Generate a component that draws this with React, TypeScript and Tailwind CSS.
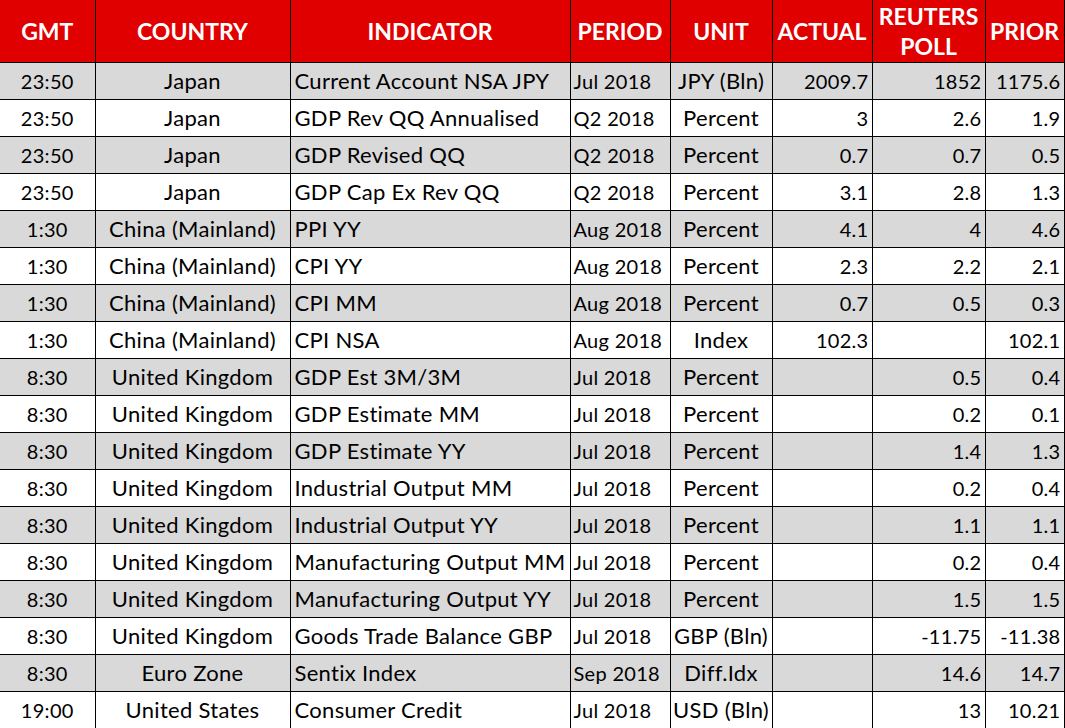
type Row = {
  gmt: string;
  country: string;
  indicator: string;
  period: string;
  unit: string;
  actual: string;
  poll: string;
  prior: string;
};

const rows: Row[] = [
  { gmt: "23:50", country: "Japan", indicator: "Current Account NSA JPY", period: "Jul 2018", unit: "JPY (Bln)", actual: "2009.7", poll: "1852", prior: "1175.6" },
  { gmt: "23:50", country: "Japan", indicator: "GDP Rev QQ Annualised", period: "Q2 2018", unit: "Percent", actual: "3", poll: "2.6", prior: "1.9" },
  { gmt: "23:50", country: "Japan", indicator: "GDP Revised QQ", period: "Q2 2018", unit: "Percent", actual: "0.7", poll: "0.7", prior: "0.5" },
  { gmt: "23:50", country: "Japan", indicator: "GDP Cap Ex Rev QQ", period: "Q2 2018", unit: "Percent", actual: "3.1", poll: "2.8", prior: "1.3" },
  { gmt: "1:30", country: "China (Mainland)", indicator: "PPI YY", period: "Aug 2018", unit: "Percent", actual: "4.1", poll: "4", prior: "4.6" },
  { gmt: "1:30", country: "China (Mainland)", indicator: "CPI YY", period: "Aug 2018", unit: "Percent", actual: "2.3", poll: "2.2", prior: "2.1" },
  { gmt: "1:30", country: "China (Mainland)", indicator: "CPI MM", period: "Aug 2018", unit: "Percent", actual: "0.7", poll: "0.5", prior: "0.3" },
  { gmt: "1:30", country: "China (Mainland)", indicator: "CPI NSA", period: "Aug 2018", unit: "Index", actual: "102.3", poll: "", prior: "102.1" },
  { gmt: "8:30", country: "United Kingdom", indicator: "GDP Est 3M/3M", period: "Jul 2018", unit: "Percent", actual: "", poll: "0.5", prior: "0.4" },
  { gmt: "8:30", country: "United Kingdom", indicator: "GDP Estimate MM", period: "Jul 2018", unit: "Percent", actual: "", poll: "0.2", prior: "0.1" },
  { gmt: "8:30", country: "United Kingdom", indicator: "GDP Estimate YY", period: "Jul 2018", unit: "Percent", actual: "", poll: "1.4", prior: "1.3" },
  { gmt: "8:30", country: "United Kingdom", indicator: "Industrial Output MM", period: "Jul 2018", unit: "Percent", actual: "", poll: "0.2", prior: "0.4" },
  { gmt: "8:30", country: "United Kingdom", indicator: "Industrial Output YY", period: "Jul 2018", unit: "Percent", actual: "", poll: "1.1", prior: "1.1" },
  { gmt: "8:30", country: "United Kingdom", indicator: "Manufacturing Output MM", period: "Jul 2018", unit: "Percent", actual: "", poll: "0.2", prior: "0.4" },
  { gmt: "8:30", country: "United Kingdom", indicator: "Manufacturing Output YY", period: "Jul 2018", unit: "Percent", actual: "", poll: "1.5", prior: "1.5" },
  { gmt: "8:30", country: "United Kingdom", indicator: "Goods Trade Balance GBP", period: "Jul 2018", unit: "GBP (Bln)", actual: "", poll: "-11.75", prior: "-11.38" },
  { gmt: "8:30", country: "Euro Zone", indicator: "Sentix Index", period: "Sep 2018", unit: "Diff.Idx", actual: "", poll: "14.6", prior: "14.7" },
  { gmt: "19:00", country: "United States", indicator: "Consumer Credit", period: "Jul 2018", unit: "USD (Bln)", actual: "", poll: "13", prior: "10.21" },
];

const th = "border border-black bg-[#e00000] text-white font-bold text-[23px] leading-[26px] text-center align-middle p-0 whitespace-nowrap";
const td = "border border-black text-black leading-[24px] tracking-[0.3px] align-middle p-0 whitespace-nowrap overflow-hidden";
// Lato digits run wider than the original's, so numeric cells get a smaller size
const txt = td + " text-[22px]";
const num = td + " text-[20px]";

export default function App() {
  return (
    <div className="w-[1065px] h-[728px] bg-white overflow-hidden" style={{ fontFamily: "Lato, 'Open Sans', sans-serif" }}>
      <table className="border-collapse table-fixed w-[1064px]">
        <colgroup>
          <col className="w-[95px]" />
          <col className="w-[195px]" />
          <col className="w-[280px]" />
          <col className="w-[100px]" />
          <col className="w-[102px]" />
          <col className="w-[100px]" />
          <col className="w-[113px]" />
          <col className="w-[79px]" />
        </colgroup>
        <thead>
          <tr className="h-[62px]">
            <th className={th + " border-l-0 border-t-0"}>GMT</th>
            <th className={th + " border-t-0"}>COUNTRY</th>
            <th className={th + " border-t-0"}>INDICATOR</th>
            <th className={th + " border-t-0"}>PERIOD</th>
            <th className={th + " border-t-0"}>UNIT</th>
            <th className={th + " border-t-0"}>ACTUAL</th>
            <th className="border border-t-0 border-black bg-[#e00000] text-white font-bold text-[23px] leading-[30px] text-center align-middle p-0 whitespace-nowrap">
              REUTERS
              <br />
              POLL
            </th>
            <th className={th + " border-t-0"}>PRIOR</th>
          </tr>
        </thead>
        <tbody>
          {rows.map((r, i) => (
            <tr key={i} className={"h-[37px] " + (i % 2 === 0 ? "bg-[#d9d9d9]" : "bg-white")}>
              <td className={num + " border-l-0 text-center"}>{r.gmt}</td>
              <td className={txt + " text-center"}>{r.country}</td>
              <td className={txt + " text-left pl-[4px]"}>{r.indicator}</td>
              <td className={num + " text-left pl-[3px]"}>{r.period}</td>
              <td className={txt + " text-center"}>{r.unit}</td>
              <td className={num + " text-right pr-[3px]"}>{r.actual}</td>
              <td className={num + " text-right pr-[3px]"}>{r.poll}</td>
              <td className={num + " text-right pr-[3px]"}>{r.prior}</td>
            </tr>
          ))}
        </tbody>
      </table>
    </div>
  );
}
